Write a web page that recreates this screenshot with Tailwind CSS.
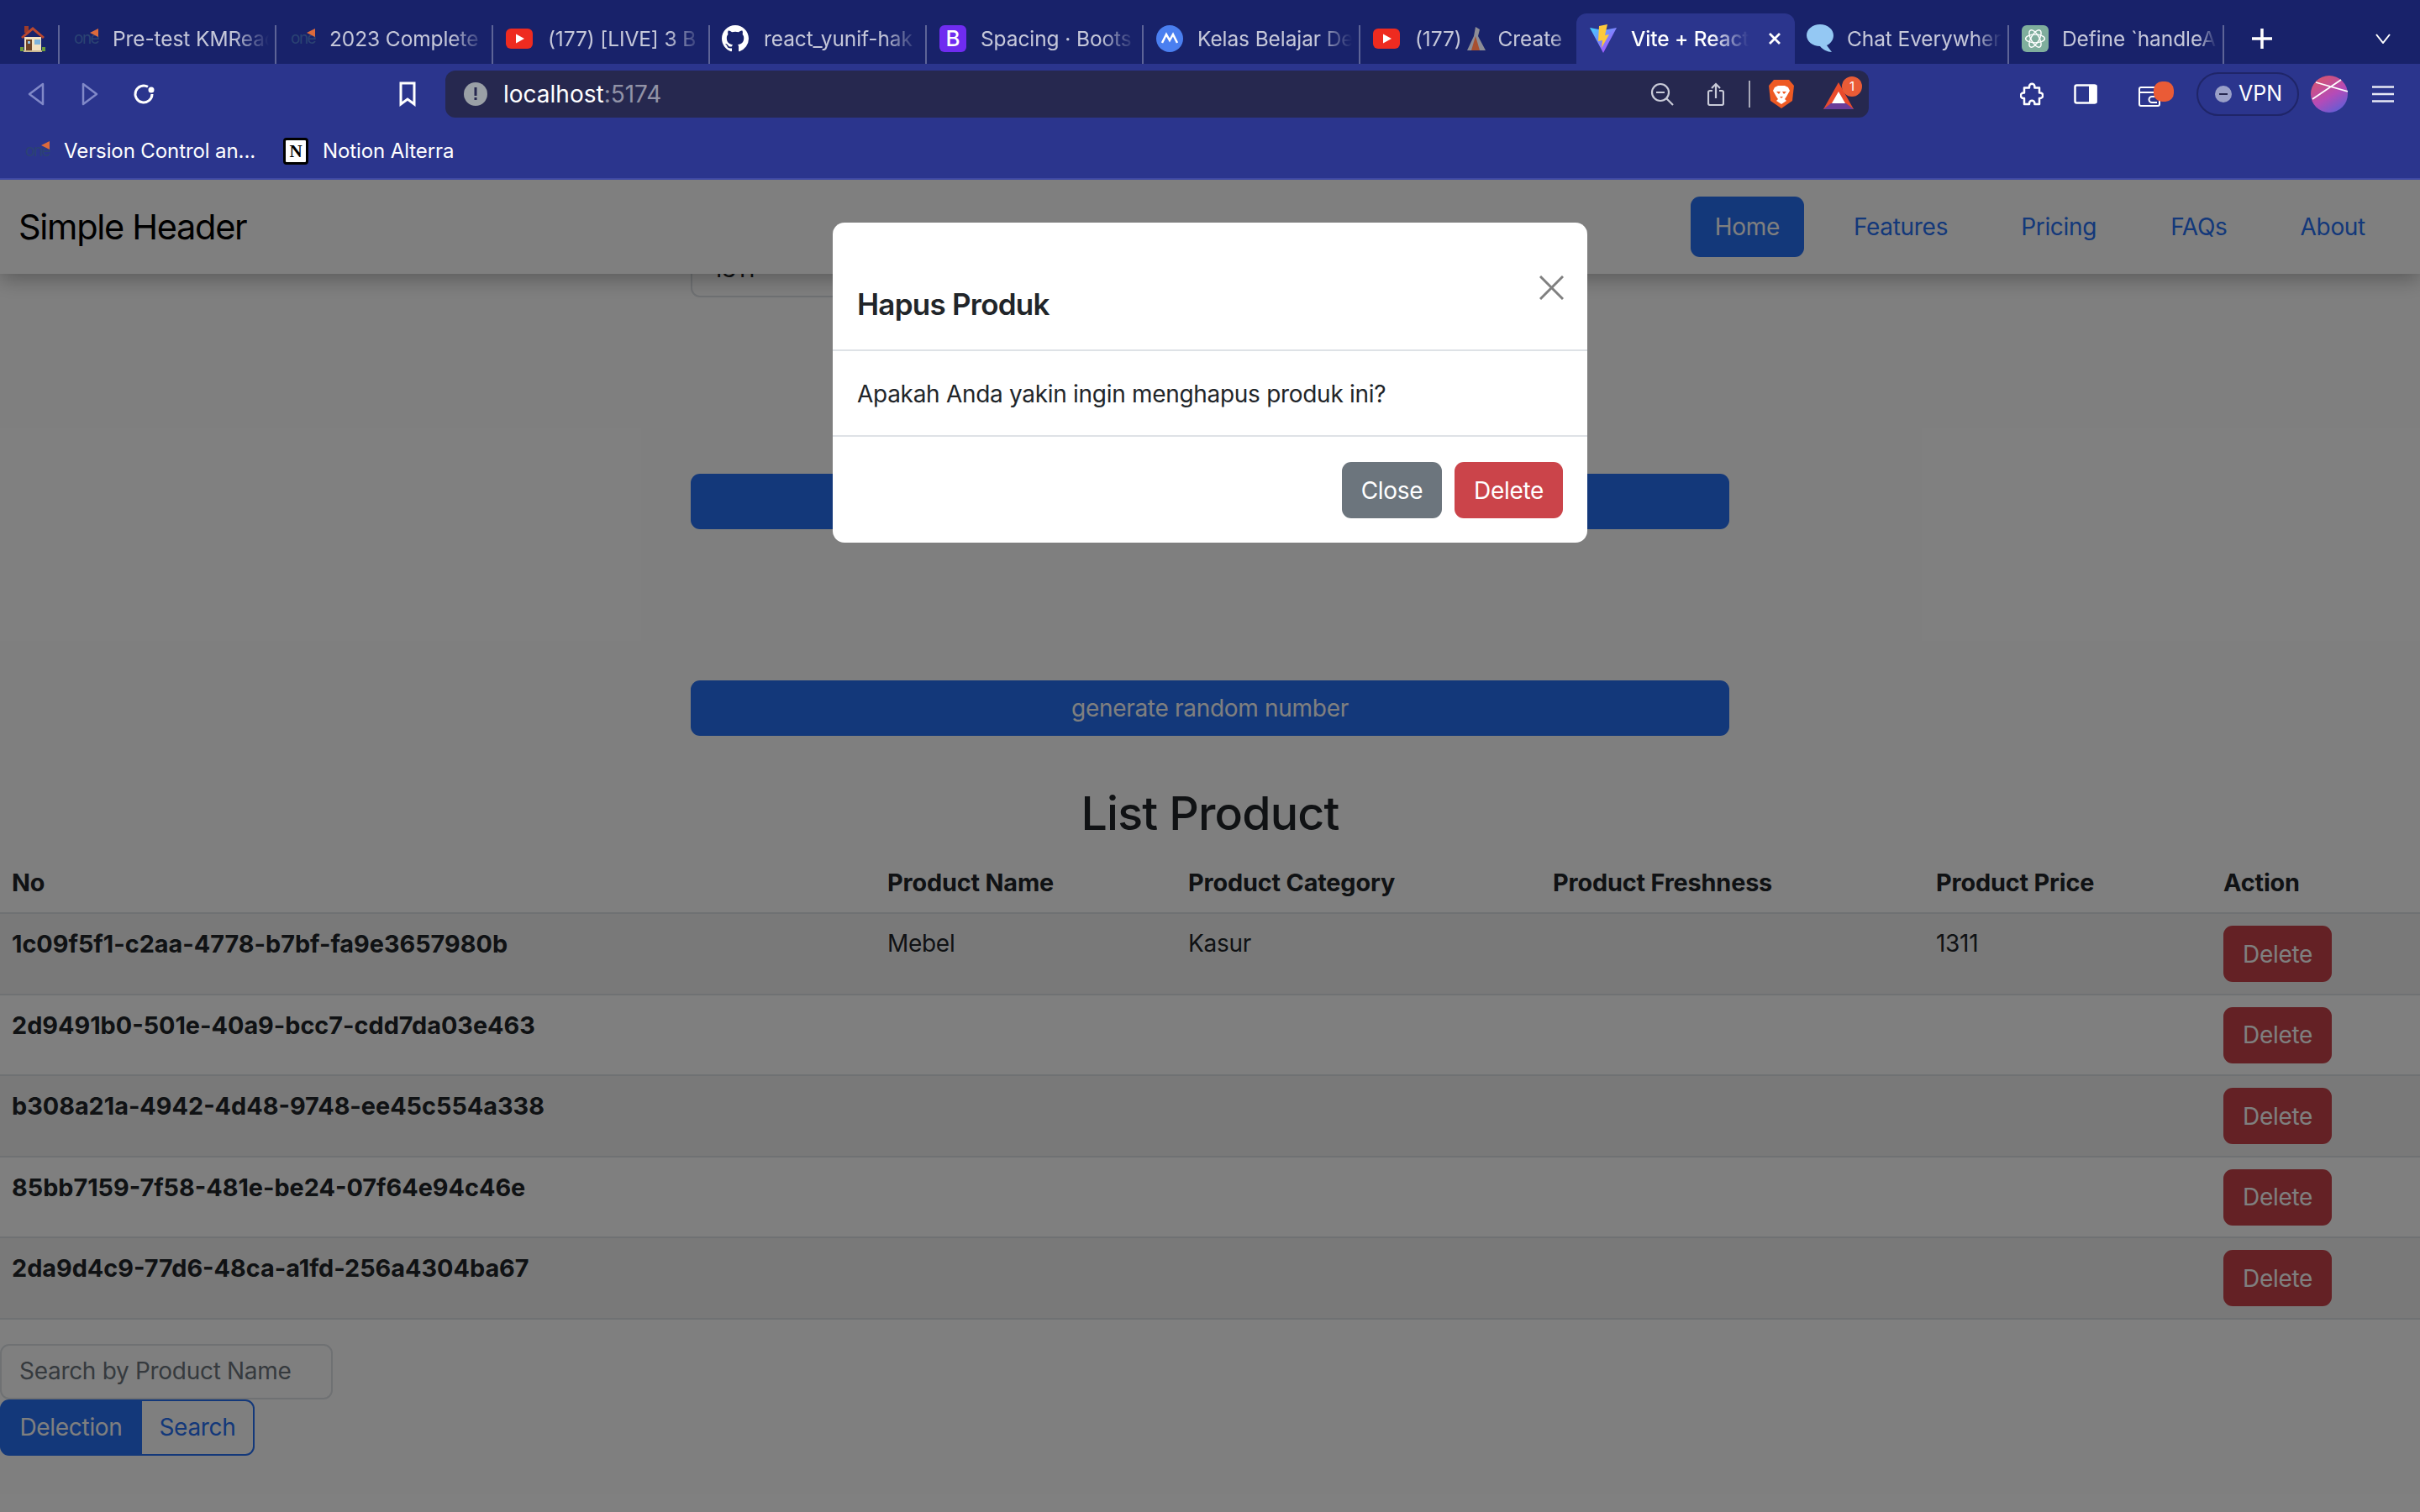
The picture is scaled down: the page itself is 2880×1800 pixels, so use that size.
<!DOCTYPE html>
<html lang="en">
<head>
  <meta charset="UTF-8" />
  <title>Vite + React</title>
  <script src="https://cdn.jsdelivr.net/npm/@tailwindcss/browser@4"></script>
</head>
<body class="w-[2880px] h-[1800px] overflow-hidden bg-white font-['Inter','Liberation_Sans',sans-serif] text-[#212529]">

  <!-- Tab strip -->
  <div class="h-[76px] bg-[#18226a] flex items-end text-[24.500px] tracking-[-0.1px] text-white/75">
    <div class="w-[71px] h-[46px] pb-[14px] pl-[9px] flex items-center justify-center border-r-2 border-white/30 shrink-0">
      <svg width="30" height="32" viewBox="0 0 30 32"><rect x="5" y="1" width="5" height="8" fill="#9c3b2a"/><path d="M5 14v16h20V14z" fill="#f3e1c0"/><path d="M15 2 1 14l2 2L15 6l12 10 2-2z" fill="#b9472f"/><rect x="7" y="17" width="7" height="13" fill="#6d4427"/><rect x="9" y="19" width="3" height="3" fill="#8fc3e8"/><rect x="17" y="17" width="7" height="6" fill="#7fb4dc"/><path d="M0 26h4v5H0zM26 26h4v5h-4z" fill="#6b9a3c"/><rect x="4" y="30" width="22" height="2" fill="#c9b792"/></svg>
    </div>
    <div class="w-[258px] h-[46px] pb-[14px] flex items-center pl-[17px] border-r-2 border-white/30 shrink-0">
      <span class="w-[28px] h-[18px] shrink-0 relative text-[19px] leading-[18px] text-[#2b4373] tracking-[-1.5px]">one<svg width="10" height="10" viewBox="0 0 10 10" class="absolute -right-[1px] -top-[3px]"><path d="M0 5 10 0v10z" fill="#dd6a3c"/></svg></span>
      <span class="ml-[18px] w-[192px] whitespace-nowrap [mask-image:linear-gradient(to_right,black_75%,transparent_97%)]">Pre-test KMReac</span>
    </div>
    <div class="w-[258px] h-[46px] pb-[14px] flex items-center pl-[17px] border-r-2 border-white/30 shrink-0">
      <span class="w-[28px] h-[18px] shrink-0 relative text-[19px] leading-[18px] text-[#2b4373] tracking-[-1.5px]">one<svg width="10" height="10" viewBox="0 0 10 10" class="absolute -right-[1px] -top-[3px]"><path d="M0 5 10 0v10z" fill="#dd6a3c"/></svg></span>
      <span class="ml-[18px] w-[192px] whitespace-nowrap [mask-image:linear-gradient(to_right,black_75%,transparent_97%)]">2023 Complete</span>
    </div>
    <div class="w-[258px] h-[46px] pb-[14px] flex items-center pl-[15px] border-r-2 border-white/30 shrink-0">
      <svg width="32" height="24" viewBox="0 0 32 24" class="shrink-0"><rect width="32" height="24" rx="6" fill="#ee2b20"/><path d="M12 6.500v11l10-5.500z" fill="#fff"/></svg>
      <span class="ml-[18px] w-[190px] whitespace-nowrap [mask-image:linear-gradient(to_right,black_75%,transparent_97%)]">(177) [LIVE] 3 B</span>
    </div>
    <div class="w-[258px] h-[46px] pb-[14px] flex items-center pl-[14px] border-r-2 border-white/30 shrink-0">
      <svg width="32" height="32" viewBox="0 0 16 16" class="shrink-0" fill="#fff"><path d="M8 0C3.580 0 0 3.580 0 8c0 3.540 2.290 6.530 5.470 7.590.4.070.55-.17.55-.38 0-.19-.01-.82-.01-1.490-2.010.37-2.530-.49-2.690-.94-.09-.23-.48-.94-.82-1.130-.28-.15-.68-.52-.01-.53.63-.01 1.080.58 1.230.82.72 1.210 1.870.87 2.330.66.07-.52.28-.87.51-1.070-1.780-.2-3.640-.89-3.640-3.950 0-.87.31-1.590.82-2.150-.08-.2-.36-1.020.08-2.120 0 0 .67-.21 2.200.82.64-.18 1.320-.27 2-.27s1.360.09 2 .27c1.530-1.040 2.200-.82 2.200-.82.44 1.100.16 1.920.08 2.120.51.56.82 1.270.82 2.150 0 3.070-1.870 3.750-3.650 3.950.29.25.54.73.54 1.480 0 1.070-.01 1.930-.01 2.200 0 .21.15.46.55.38A8.010 8.010 0 0 0 16 8c0-4.420-3.580-8-8-8"/></svg>
      <span class="ml-[18px] w-[190px] whitespace-nowrap [mask-image:linear-gradient(to_right,black_75%,transparent_97%)]">react_yunif-hak</span>
    </div>
    <div class="w-[258px] h-[46px] pb-[14px] flex items-center pl-[15px] border-r-2 border-white/30 shrink-0">
      <span class="w-[32px] h-[32px] shrink-0 rounded-[6px] bg-[#6f2cf0] text-white text-[26px] leading-[32px] font-medium text-center">B</span>
      <span class="ml-[17px] w-[190px] whitespace-nowrap [mask-image:linear-gradient(to_right,black_75%,transparent_97%)]">Spacing · Boots</span>
    </div>
    <div class="w-[258px] h-[46px] pb-[14px] flex items-center pl-[15px] border-r-2 border-white/30 shrink-0">
      <svg width="32" height="32" viewBox="0 0 32 32" class="shrink-0"><circle cx="16" cy="16" r="16" fill="#4a7ff0"/><path d="M7 21l5-10 4 7 4-7 5 10" fill="none" stroke="#fff" stroke-width="2.500"/></svg>
      <span class="ml-[17px] w-[190px] whitespace-nowrap [mask-image:linear-gradient(to_right,black_75%,transparent_97%)]">Kelas Belajar De</span>
    </div>
    <div class="w-[257px] h-[46px] pb-[14px] flex items-center pl-[15px] shrink-0">
      <svg width="32" height="24" viewBox="0 0 32 24" class="shrink-0"><rect width="32" height="24" rx="6" fill="#ee2b20"/><path d="M12 6.500v11l10-5.500z" fill="#fff"/></svg>
      <span class="ml-[18px] whitespace-nowrap w-[190px] flex items-center [mask-image:linear-gradient(to_right,black_85%,transparent)]">(177)<svg width="26" height="30" viewBox="0 0 26 30" class="ml-[4px] mr-[13px] shrink-0"><path d="M12 1l5 3-2 8 9 17H2l8-17z" fill="#8d8d96"/><path d="M12 12l5 17H7z" fill="#a8502f"/></svg>Create</span>
    </div>
    <div class="w-[260px] h-[60px] bg-[#2b358d] rounded-t-[12px] flex items-center pl-[16px] text-white shrink-0">
      <svg width="32" height="34" viewBox="0 0 32 34" class="shrink-0"><defs><linearGradient id="viteBody" x1="0" y1="0" x2="1" y2="1"><stop offset="0" stop-color="#41d1ff"/><stop offset="1" stop-color="#bd34fe"/></linearGradient></defs><path d="M0 4l16 3 16-3-16 30z" fill="url(#viteBody)"/><path d="M21 0 11 2l-1 18 5-1-1 9 9-16-5 1 3-13z" fill="#fdc93c"/></svg>
      <span class="ml-[17px] w-[146px] whitespace-nowrap font-medium [mask-image:linear-gradient(to_right,black_65%,transparent_96%)]">Vite + React</span>
      <svg width="16" height="16" viewBox="0 0 16 16" class="ml-[17px] shrink-0"><path d="M2 2l12 12M14 2 2 14" stroke="#fff" stroke-width="2.800"/></svg>
    </div>
    <div class="w-[255px] h-[46px] pb-[14px] flex items-center pl-[14px] border-r-2 border-white/30 shrink-0">
      <svg width="32" height="34" viewBox="0 0 32 34" class="shrink-0"><path d="M16 0c9 0 16 6 16 13 0 6-4 10-8 12l6 8c-5 0-11-3-14-7C7 26 0 20 0 13 0 6 7 0 16 0z" fill="#94c8f3"/></svg>
      <span class="ml-[16px] w-[190px] whitespace-nowrap [mask-image:linear-gradient(to_right,black_80%,transparent_97%)]">Chat Everywher</span>
    </div>
    <div class="w-[256px] h-[46px] pb-[14px] flex items-center pl-[15px] border-r-2 border-white/30 shrink-0">
      <span class="w-[32px] h-[32px] shrink-0 rounded-[6px] bg-[#7fae9d] flex items-center justify-center">
        <svg width="26" height="26" viewBox="0 0 24 24" fill="none" stroke="#fff" stroke-width="1.300"><ellipse cx="12" cy="12" rx="10.500" ry="4.500"/><ellipse cx="12" cy="12" rx="10.500" ry="4.500" transform="rotate(60 12 12)"/><ellipse cx="12" cy="12" rx="10.500" ry="4.500" transform="rotate(120 12 12)"/></svg>
      </span>
      <span class="ml-[16px] w-[190px] whitespace-nowrap [mask-image:linear-gradient(to_right,black_85%,transparent_97%)]">Define `handleA</span>
    </div>
    <div class="h-[46px] pb-[14px] flex items-center pl-[32px] shrink-0">
      <svg width="26" height="26" viewBox="0 0 26 26"><path d="M13 1v24M1 13h24" stroke="#fff" stroke-width="3.500"/></svg>
    </div>
    <div class="h-[46px] pb-[14px] flex items-center pl-[122px] shrink-0">
      <svg width="18" height="12" viewBox="0 0 18 12" fill="none"><path d="M1 1l8 10 8-10" stroke="#fff" stroke-width="2"/></svg>
    </div>
  </div>

  <!-- Toolbar and bookmarks -->
  <div class="h-[138px] bg-[#2b358d] border-b-2 border-[#3f49a3] text-white">
    <div class="h-[64px] pt-[8px] flex items-center">
      <div class="w-[530px] flex items-center shrink-0">
        <svg width="24" height="30" viewBox="0 0 24 30" class="ml-[31px]" fill="none" stroke="#8189c8" stroke-width="2.500"><path d="M20 3 4 15l16 12z" stroke-linejoin="round"/></svg>
        <svg width="24" height="30" viewBox="0 0 24 30" class="ml-[40px]" fill="none" stroke="#8189c8" stroke-width="2.500"><path d="M4 3l16 12L4 27z" stroke-linejoin="round"/></svg>
        <svg width="30" height="30" viewBox="0 0 30 30" class="ml-[37px]" fill="none" stroke="#fff" stroke-width="3"><path d="M25 15a10 10 0 1 1-5-8.700"/><circle cx="24" cy="10" r="2" fill="#fff"/></svg>
        <svg width="22" height="30" viewBox="0 0 22 30" class="ml-[288px]" fill="none" stroke="#fff" stroke-width="3"><path d="M3 2h16v25l-8-6-8 6z"/></svg>
      </div>
      <div class="w-[1694px] h-[56px] bg-[#26284f] rounded-[12px] flex items-center pl-[22px] shrink-0">
        <svg width="28" height="28" viewBox="0 0 28 28"><circle cx="14" cy="14" r="14" fill="#9aa0a6"/><rect x="12.500" y="6" width="3" height="10" fill="#26284f"/><rect x="12.500" y="18" width="3" height="3" fill="#26284f"/></svg>
        <span class="ml-[19px] text-[28px]">localhost<span class="text-white/50">:5174</span></span>
        <div class="ml-auto flex items-center pr-[8px]">
          <svg width="28" height="28" viewBox="0 0 28 28" fill="none" stroke="#c9cbd8" stroke-width="2.200"><circle cx="12" cy="12" r="10"/><path d="M7 12h10M19 19l8 8"/></svg>
          <svg width="20" height="28" viewBox="0 0 20 28" class="ml-[40px]" fill="none" stroke="#c9cbd8" stroke-width="2.200"><path d="M6 10H3a2 2 0 0 0-2 2v13a2 2 0 0 0 2 2h14a2 2 0 0 0 2-2V12a2 2 0 0 0-2-2h-3M10 19V2M5 7l5-5 5 5"/></svg>
          <span class="w-[2px] h-[32px] bg-white/60 ml-[29px]"></span>
          <svg width="32" height="36" viewBox="0 0 32 36" class="ml-[21px]"><path d="M7 1h18l6 7-2 18-13 9-13-9L1 8z" fill="#ee5a24"/><path d="M8 10l4-2h8l4 2 2 4-4 7-2 3 2 2-6 4-6-4 2-2-2-3-4-7z" fill="#fff"/><path d="M10 15h5l-2 3zM17 15h5l-3 3zM14 21h4l-2 2z" fill="#ee5a24"/></svg>
          <div class="relative ml-[34px] w-[46px] h-[36px]">
            <svg width="36" height="32" viewBox="0 0 36 32" class="absolute left-0 bottom-0"><path d="M18 0 0 32h36z" fill="#ea4b2c"/><path d="M0 32h36l-9-7H9z" fill="#6a3d9a"/><path d="M18 11 10 25h16z" fill="#fff"/></svg>
            <span class="absolute -top-[3px] right-0 w-[24px] h-[24px] rounded-full bg-[#ea5b36] text-[15px] leading-[24px] text-center">1</span>
          </div>
        </div>
      </div>
      <svg width="28" height="28" viewBox="0 0 28 28" class="ml-[180px] shrink-0" fill="none" stroke="#fff" stroke-width="2.500" stroke-linejoin="round"><path d="M11 5a3.200 3.200 0 0 1 6.400 0v1.500H23v6h1a3.200 3.200 0 0 1 0 6.400h-1V26h-5.600v-1a3.200 3.200 0 0 0-6.400 0v1H5v-7H4a3.200 3.200 0 0 1 0-6.400h1V6.500h6z"/></svg>
      <svg width="28" height="24" viewBox="0 0 28 24" class="ml-[36px] shrink-0"><rect x="1.500" y="1.500" width="25" height="21" rx="2" fill="none" stroke="#fff" stroke-width="2.500"/><rect x="18" y="1" width="9.500" height="22" rx="1" fill="#fff"/></svg>
      <div class="relative ml-[49px] w-[42px] h-[30px] shrink-0">
        <svg width="26" height="24" viewBox="0 0 26 24" class="absolute left-0 bottom-0" fill="none" stroke="#fff" stroke-width="2"><rect x="1" y="1" width="24" height="22" rx="2"/><path d="M1 7h24"/><path d="M22 12h-6a3.500 3.500 0 0 0 0 7h6"/></svg>
        <span class="absolute top-0 right-0 w-[24px] h-[24px] rounded-[10px] bg-[#ea5b36]"></span>
      </div>
      <div class="ml-[27px] w-[122px] h-[52px] rounded-full border-2 border-[#1f2568] flex items-center pl-[20px] text-[25px] shrink-0">
        <span class="w-[20px] h-[20px] rounded-full bg-[#9aa0c8] flex items-center justify-center"><i class="block w-[10px] h-[2px] bg-[#26284f]"></i></span>
        <span class="ml-[8px]">VPN</span>
      </div>
      <svg width="44" height="44" viewBox="0 0 44 44" class="ml-[14px] shrink-0"><defs><linearGradient id="avatar" x1="0.200" y1="0" x2="0.800" y2="1"><stop offset="0" stop-color="#d9556a"/><stop offset=".55" stop-color="#b44bb8"/><stop offset="1" stop-color="#5a5fd8"/></linearGradient></defs><circle cx="22" cy="22" r="22" fill="url(#avatar)"/><path d="M6 8l38 11M36 5 2 28" stroke="#fff" stroke-width="1.800" fill="none"/></svg>
      <svg width="26" height="20" viewBox="0 0 26 20" class="ml-[29px] shrink-0"><path d="M0 1.500h26M0 10h26M0 18.500h26" stroke="#e6e8f5" stroke-width="2.500"/></svg>
    </div>
    <!-- Bookmarks -->
    <div class="h-[72px] pt-[7px] flex items-center text-[24px] tracking-[-0.1px] pl-[30px]">
      <span class="w-[28px] h-[18px] shrink-0 relative text-[19px] leading-[18px] text-[#2b4373] tracking-[-1.5px]">one<svg width="10" height="10" viewBox="0 0 10 10" class="absolute -right-[1px] -top-[3px]"><path d="M0 5 10 0v10z" fill="#dd6a3c"/></svg></span>
      <span class="ml-[18px]">Version Control an...</span>
      <span class="ml-[33px] w-[30px] h-[32px] shrink-0 bg-white border-[3px] border-black rounded-[4px] text-black text-[21px] leading-[26px] text-center font-['Liberation_Serif',serif] font-bold">N</span>
      <span class="ml-[17px]">Notion Alterra</span>
    </div>
  </div>

  <!-- Page viewport -->
  <div class="relative h-[1586px] overflow-hidden text-[28px] tracking-[-0.3px] leading-[43px]">
    <nav class="relative z-10 h-[112px] bg-white shadow-[0_6px_24px_rgba(0,0,0,0.3)] flex items-center pl-[22px] pr-[65px]">
      <span class="text-[41.500px] tracking-[-1.300px] text-black">Simple Header</span>
      <div class="ml-auto flex items-center text-[#2670f4]">
        <a class="w-[135px] h-[72px] rounded-[11px] bg-[#2670f4] text-white flex items-center justify-center">Home</a>
        <a class="ml-[59px]">Features</a>
        <a class="ml-[87px]">Pricing</a>
        <a class="ml-[88px]">FAQs</a>
        <a class="ml-[87px]">About</a>
      </div>
    </nav>

    <!-- Form behind the navbar -->
    <div class="w-[1236px] mx-auto -mt-[40px]">
      <div class="w-[400px] h-[68px] border-2 border-[#dee2e6] rounded-[11px] px-[24px] flex items-center">1311</div>
      <div class="h-[66px] mt-[210px] bg-[#2670f4] rounded-[11px]"></div>
      <div class="h-[66px] pt-[1px] mt-[180px] bg-[#2670f4] rounded-[11px] text-white flex items-center justify-center">generate random number</div>
    </div>
    <h2 class="mt-[57px] text-center text-[55.500px] tracking-[-0.850px] leading-[69px] font-medium">List Product</h2>

    <table class="mt-[13px] w-full table-fixed border-collapse">
      <colgroup>
        <col class="w-[1042px]" /><col class="w-[358px]" /><col class="w-[434px]" /><col class="w-[456px]" /><col class="w-[342px]" /><col />
      </colgroup>
      <thead>
        <tr class="h-[72px] text-left text-[28.800px] tracking-[-0.150px]">
          <th class="px-[14px] font-bold">No</th><th class="px-[14px] font-bold">Product Name</th><th class="px-[14px] font-bold">Product Category</th><th class="px-[14px] font-bold">Product Freshness</th><th class="px-[14px] font-bold">Product Price</th><th class="px-[14px] font-bold">Action</th>
        </tr>
      </thead>
      <tbody>
        <tr class="bg-black/5 border-t-2 border-[#dee2e6] align-top">
          <td class="p-[14px] font-bold text-[28.800px] tracking-normal">1c09f5f1-c2aa-4778-b7bf-fa9e3657980b</td><td class="p-[14px]">Mebel</td><td class="p-[14px]">Kasur</td><td class="p-[14px]"></td><td class="p-[14px]">1311</td>
          <td class="pt-[14px] pb-[13.600px] px-[14px]"><button class="block w-[129px] h-[67px] pt-[1px] rounded-[11px] bg-[#c9434a] text-white">Delete</button></td>
        </tr>
        <tr class="border-t-2 border-[#dee2e6] align-top">
          <td class="p-[14px] font-bold text-[28.800px] tracking-normal">2d9491b0-501e-40a9-bcc7-cdd7da03e463</td><td></td><td></td><td></td><td></td>
          <td class="pt-[14px] pb-[13.600px] px-[14px]"><button class="block w-[129px] h-[67px] pt-[1px] rounded-[11px] bg-[#c9434a] text-white">Delete</button></td>
        </tr>
        <tr class="bg-black/5 border-t-2 border-[#dee2e6] align-top">
          <td class="p-[14px] font-bold text-[28.800px] tracking-normal">b308a21a-4942-4d48-9748-ee45c554a338</td><td></td><td></td><td></td><td></td>
          <td class="pt-[14px] pb-[13.600px] px-[14px]"><button class="block w-[129px] h-[67px] pt-[1px] rounded-[11px] bg-[#c9434a] text-white">Delete</button></td>
        </tr>
        <tr class="border-t-2 border-[#dee2e6] align-top">
          <td class="p-[14px] font-bold text-[28.800px] tracking-normal">85bb7159-7f58-481e-be24-07f64e94c46e</td><td></td><td></td><td></td><td></td>
          <td class="pt-[14px] pb-[13.600px] px-[14px]"><button class="block w-[129px] h-[67px] pt-[1px] rounded-[11px] bg-[#c9434a] text-white">Delete</button></td>
        </tr>
        <tr class="bg-black/5 border-y-2 border-[#dee2e6] align-top">
          <td class="p-[14px] font-bold text-[28.800px] tracking-normal">2da9d4c9-77d6-48ca-a1fd-256a4304ba67</td><td></td><td></td><td></td><td></td>
          <td class="pt-[14px] pb-[13.600px] px-[14px]"><button class="block w-[129px] h-[67px] pt-[1px] rounded-[11px] bg-[#c9434a] text-white">Delete</button></td>
        </tr>
      </tbody>
    </table>

    <!-- Search -->
    <div class="mt-[29px] w-[396px] h-[66px] border-2 border-[#dee2e6] rounded-[11px] pl-[21px] flex items-center text-[#6c757d]">Search by Product Name</div>
    <div class="flex w-[303px] h-[67px]">
      <span class="w-[169px] bg-[#2670f4] text-white rounded-l-[11px] flex items-center justify-center">Delection</span>
      <span class="w-[134px] border-2 border-l-0 border-[#2670f4] text-[#2670f4] rounded-r-[11px] flex items-center justify-center">Search</span>
    </div>

    <!-- Modal -->
    <div class="absolute inset-0 z-20 bg-black/50 flex justify-center items-start pt-[51px]">
      <div class="w-[898px] h-[381px] bg-white rounded-[14px] flex flex-col">
        <div class="relative h-[153px] border-b-2 border-[#dee2e6] flex items-end pl-[29px] pb-[30px]">
          <span class="text-[35px] tracking-[-0.750px] leading-[48px] font-semibold">Hapus Produk</span>
          <svg width="29" height="29" viewBox="0 0 29 29" class="absolute right-[28px] top-[63px]"><path d="M1 1l27 27M28 1 1 28" stroke="#808080" stroke-width="3"/></svg>
        </div>
        <div class="h-[102px] pt-[2px] border-b-2 border-[#dee2e6] flex items-center pl-[29px]">Apakah Anda yakin ingin menghapus produk ini?</div>
        <div class="flex-1 flex justify-end items-start pt-[30px] pr-[29px] gap-[15px]">
          <button class="w-[119px] h-[67px] pt-[1px] rounded-[11px] bg-[#6c757d] text-white">Close</button>
          <button class="w-[129px] h-[67px] pt-[1px] rounded-[11px] bg-[#cb444a] text-white">Delete</button>
        </div>
      </div>
    </div>
  </div>
</body>
</html>
